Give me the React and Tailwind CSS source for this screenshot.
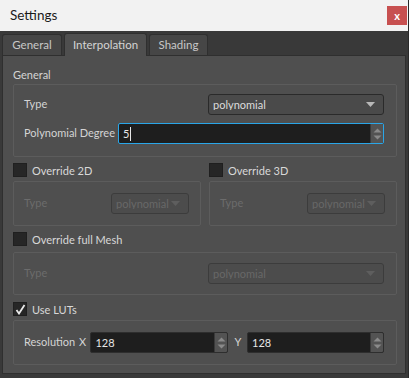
import React from "react";

function Arrow({ color = "#bdbdbd" }) {
  return (
    <svg width="9" height="5" viewBox="0 0 9 5" className="block shrink-0">
      <path d="M0 0 L9 0 L4.5 5 Z" fill={color} />
    </svg>
  );
}

function Combo({ w, disabled, text = "polynomial" }) {
  return (
    <div
      className={`h-[21px] flex items-center pl-[4px] pr-[8px] rounded-[3px] border shrink-0 ${
        disabled
          ? "border-[#3c3c3c] bg-[#4c4c4c] text-[#686868]"
          : "border-[#2a2a2a] bg-[#4a4a4a] text-[#dcdcdc]"
      } ${w}`}
    >
      <span className="flex-1 leading-none overflow-hidden whitespace-nowrap">{text}</span>
      <Arrow color={disabled ? "#5e5e5e" : "#b8b8b8"} />
    </div>
  );
}

function SpinButtons() {
  return (
    <div className="w-[13px] h-full bg-[#535353] flex flex-col items-center justify-center gap-[2px] border-l border-[#3a3a3a]">
      <svg width="9" height="5" viewBox="0 0 9 5" className="block">
        <path d="M0.5 4.5 L4.5 0.5 L8.5 4.5 Z" fill="#8a8a8a" />
      </svg>
      <svg width="9" height="5" viewBox="0 0 9 5" className="block">
        <path d="M0.5 0.5 L4.5 4.5 L8.5 0.5 Z" fill="#8a8a8a" />
      </svg>
    </div>
  );
}

function Spin({ w, value, focused }) {
  return (
    <div
      className={`h-[21px] flex items-stretch rounded-[2px] border overflow-hidden bg-[#1e1e1e] shrink-0 ${
        focused ? "border-[#2aa6e8]" : "border-[#2e2e2e]"
      } ${w}`}
    >
      <div className="flex-1 flex items-center pl-[4px] text-[#e6e6e6]">
        <span className="leading-none">{value}</span>
        {focused && <span className="w-[1px] h-[14px] bg-[#e6e6e6] ml-[1px]" />}
      </div>
      <SpinButtons />
    </div>
  );
}

function Check({ checked, label }) {
  return (
    <div className="h-[14px] flex items-center gap-[5px]">
      <div className="w-[14px] h-[14px] bg-[#262626] border border-[#1f1f1f] flex items-center justify-center">
        {checked && (
          <svg width="11" height="11" viewBox="0 0 11 11" className="block">
            <path d="M1.5 6 L4 9.5 L9.5 1" stroke="#e8e8e8" strokeWidth="1.8" fill="none" />
          </svg>
        )}
      </div>
      <span className="text-[#d8d8d8] leading-none whitespace-nowrap">{label}</span>
    </div>
  );
}

function Group({ className = "", children }) {
  return (
    <div className={`border border-[#5c5c5c] rounded-[2px] ${className}`}>{children}</div>
  );
}

export default function App() {
  return (
    <div
      className="w-[409px] h-[378px] bg-[#393939] flex flex-col text-[11px] overflow-hidden border-r border-[#2a2a2a] whitespace-nowrap"
      style={{ fontFamily: 'Lato, "Noto Sans", sans-serif' }}
    >
      {/* Title bar */}
      <div className="h-[31px] bg-[#f2f2f2] flex items-center pl-[10px] pr-[1px] shrink-0">
        <span className="text-[13.5px] text-[#1a1a1a] leading-none">Settings</span>
        <div className="ml-auto w-[20px] h-[19px] bg-[#c75050] flex items-center justify-center text-white font-bold text-[11px] leading-none">
          x
        </div>
      </div>

      {/* Tabs */}
      <div className="h-[23px] flex items-end pl-[2px] gap-[2px] mt-[1px] shrink-0 text-[11.5px]">
        <div className="h-[21px] w-[60px] bg-[#464646] border border-b-0 border-[#2f2f2f] rounded-t-[3px] flex items-center justify-center text-[#c8c8c8]">
          General
        </div>
        <div className="h-[23px] w-[83px] bg-[#4f4f4f] border border-b-0 border-[#2f2f2f] rounded-t-[3px] flex items-center justify-center text-[#d4d4d4] -mb-[1px] relative z-10">
          Interpolation
        </div>
        <div className="h-[21px] w-[59px] bg-[#464646] border border-b-0 border-[#2f2f2f] rounded-t-[3px] flex items-center justify-center text-[#c8c8c8]">
          Shading
        </div>
      </div>

      {/* Panel */}
      <div className="ml-[2px] mr-[2px] h-[319px] bg-[#4f4f4f] border border-[#2f2f2f] flex flex-col pl-[10px] pr-[8px] text-[#d4d4d4]">
        <div className="h-[28px] flex items-center pt-[9px]">
          <span className="leading-none">General</span>
        </div>
        <Group className="h-[73px] pl-[10px] pr-[12px] pt-[9px] flex flex-col gap-[8px]">
          <div className="flex items-center h-[21px]">
            <span className="flex-1">Type</span>
            <Combo w="w-[176px]" />
          </div>
          <div className="flex items-center h-[21px]">
            <span className="flex-1">Polynomial Degree</span>
            <Spin w="w-[266px]" value="5" focused />
          </div>
        </Group>

        <div className="flex gap-[8px] mt-[6px]">
          <div className="w-[188px] flex flex-col gap-[4px]">
            <Check label="Override 2D" />
            <Group className="h-[45px] pl-[10px] pr-[11px] flex items-center">
              <span className="flex-1 text-[#6c6c6c]">Type</span>
              <Combo w="w-[78px]" disabled />
            </Group>
          </div>
          <div className="w-[188px] flex flex-col gap-[4px]">
            <Check label="Override 3D" />
            <Group className="h-[45px] pl-[10px] pr-[11px] flex items-center">
              <span className="flex-1 text-[#6c6c6c]">Type</span>
              <Combo w="w-[78px]" disabled />
            </Group>
          </div>
        </div>

        <div className="flex flex-col gap-[6px] mt-[6px]">
          <Check label="Override full Mesh" />
          <Group className="h-[43px] pl-[10px] pr-[12px] flex items-center">
            <span className="flex-1 text-[#6c6c6c]">Type</span>
            <Combo w="w-[176px]" disabled />
          </Group>
        </div>

        <div className="flex flex-col gap-[4px] mt-[7px]">
          <Check checked label="Use LUTs" />
          <Group className="h-[45px] pl-[10px] pr-[12px] flex items-center">
            <span className="w-[57px]">Resolution</span>
            <span className="w-[12px]">X</span>
            <Spin w="w-[138px]" value="128" />
            <span className="w-[19px] pl-[6px]">Y</span>
            <Spin w="w-[137px]" value="128" />
          </Group>
        </div>
      </div>
    </div>
  );
}
